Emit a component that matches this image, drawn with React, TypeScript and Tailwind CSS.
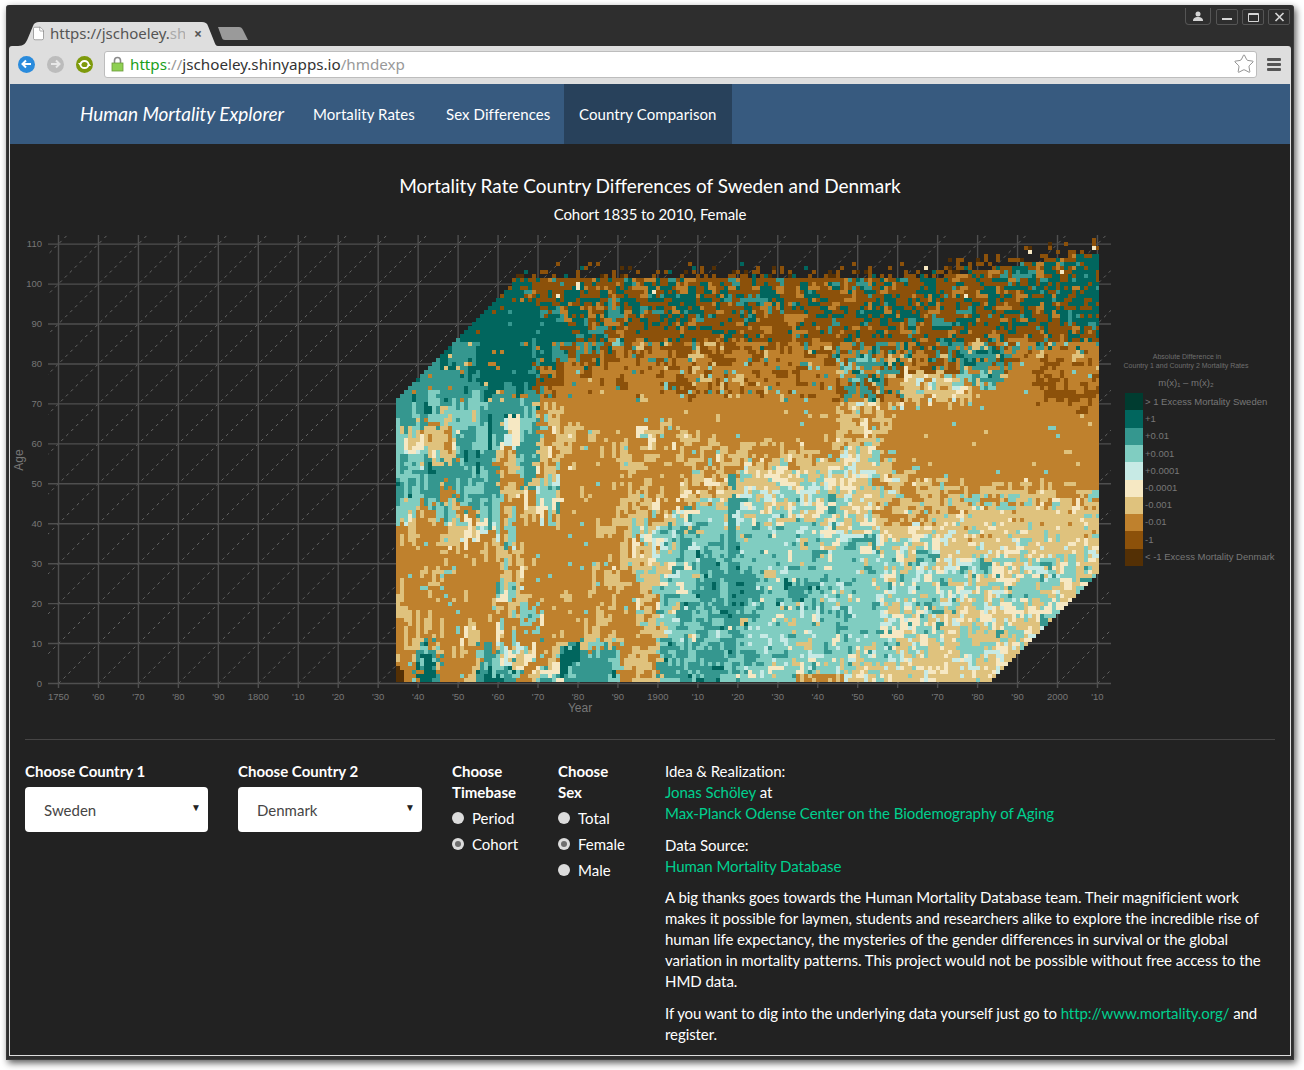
import { useMemo } from 'react';
import { File, Star } from 'lucide-react';

// BrBG palette, index 0 = "< -1" ... index 9 = "> 1"
const PALETTE = ['#543005', '#8c510a', '#bf812d', '#dfc27d', '#f6e8c3', '#c7eae5', '#80cdc1', '#35978f', '#01665e', '#003c30'];

// coarse picture of the surface: 36 columns of 20px from x=396, 21 rows of 20px from y=263
// digit 9 stands for "mostly tan", see LOW below
const ROWS = [
  '444444444444444444444444444444555566',
  '888888545455555554545454545445555567',
  '888888875555555545454545555454555667',
  '888888886654443333344444444433334556',
  '877788884433333333323355444477532222',
  '777788842222222222222255443367321221',
  '777777732222222222222244444432221111',
  '776677732222222222222233322222222222',
  '433774733322333222222233222222222222',
  '543773733232323333333344322222222222',
  '777773732223223334444444332222222222',
  '773773352322323344455544433333333333',
  '536363352223335666655544333399999999',
  '322455322223567666666555444499999999',
  '223223222223356776666665555444444444',
  '222223222233356777666666555555555554',
  '232226222232366777677666555555554444',
  '322223622222367777666666555444445544',
  '222323222222366666666666555454544444',
  '273274527772377777666665544454444444',
  '272277357772377776666644444444444444',
];

// what a cell can turn out as, one random character per cell
const TOP: Record<number, string> = {
  3: '11111111111111228888',
  4: '11111111111112278888',
  5: '11111111122788888888',
  6: '11111118888888888877',
  7: '11188888888888888777',
  8: '18888888888888888878',
};
const MID: Record<number, string> = {
  1: '11111111111111122222',
  2: '22222222222221111736',
  3: '22222222111111117783',
  4: '11111112222227778883',
  5: '77777777788811222266',
  6: '77777777777666622231',
  7: '77777777777888822233',
  8: '88888888888888887712',
};
const LOW: Record<number, string> = {
  1: '11111111111111122222',
  2: '22222222222222222336',
  3: '22222222333333333346',
  4: '33333333333444445566',
  5: '33344445556666666677',
  6: '66666666666666775543',
  7: '77777777777777666668',
  8: '88888888888888877772',
  9: '33333333333333334462',
};

const LEGEND = [
  { color: '#003c30', label: '> 1 Excess Mortality Sweden' },
  { color: '#01665e', label: '+1' },
  { color: '#35978f', label: '+0.01' },
  { color: '#80cdc1', label: '+0.001' },
  { color: '#c7eae5', label: '+0.0001' },
  { color: '#f6e8c3', label: '-0.0001' },
  { color: '#dfc27d', label: '-0.001' },
  { color: '#bf812d', label: '-0.01' },
  { color: '#8c510a', label: '-1' },
  { color: '#543005', label: '< -1 Excess Mortality Denmark' },
];

const X_LABELS = ['1750', "'60", "'70", "'80", "'90", '1800', "'10", "'20", "'30", "'40", "'50", "'60", "'70", "'80", "'90", '1900', "'10", "'20", "'30", "'40", "'50", "'60", "'70", "'80", "'90", '2000', "'10"];
const Y_LABELS = ['0', '10', '20', '30', '40', '50', '60', '70', '80', '90', '100', '110'];

// seeded random, so the picture is the same on every run
function makeRandom(seed: number) {
  let s = seed;
  return () => {
    s |= 0;
    s = (s + 0x6d2b79f5) | 0;
    let t = Math.imul(s ^ (s >>> 15), 1 | s);
    t = (t + Math.imul(t ^ (t >>> 7), 61 | t)) ^ t;
    return ((t ^ (t >>> 14)) >>> 0) / 4294967296;
  };
}

function buildCells() {
  const rnd = makeRandom(1835);
  const paths: string[] = PALETTE.map(() => '');
  const levels = new Int8Array(176 * 112).fill(-1);

  for (let c = 0; c < 176; c++) {
    const amax = c < 29 ? 70 + c : 100 + Math.max(0, c - 130) * 0.155;
    for (let a = 0; a <= 110; a++) {
      if (a < c - 148) continue;
      let level = -1;
      const x = 396 + c * 4;
      const y = 682 - (a + 1) * 4;
      if (a > amax) {
        // scattered cells above the upper edge
        if (c >= 29 && a <= amax + 4 && rnd() < 0.42 - (a - amax) * 0.08) {
          const t = rnd();
          level = t < 0.68 ? 1 : t < 0.84 ? 0 : t < 0.97 ? 8 : 4;
        } else continue;
      } else {
        const jx = x + (rnd() - 0.5) * 10;
        const jy = y + (rnd() - 0.5) * 16;
        const col = Math.max(0, Math.min(35, Math.floor((jx - 396) / 20)));
        const row = Math.max(0, Math.min(20, Math.floor((jy - 263) / 20)));
        const m = Number(ROWS[row].charAt(col));
        const table = y < 340 ? TOP : y < 400 && !(x > 900 && y > 370) ? MID : LOW;
        const choices = table[m] ?? table[m < 3 ? 3 : 8] ?? LOW[m];
        level = Number(choices.charAt(Math.floor(rnd() * 20)));
        // the big orange areas are nearly solid
        if (table === LOW && m === 2 && x > 540 && y < 500 && rnd() < 0.75) level = 2;

        // blobs and vertical streaks: often take over a neighbour's colour
        const below = a > 0 ? levels[c * 112 + a - 1] : -1;
        const left = c > 0 ? levels[(c - 1) * 112 + a] : -1;
        const pBelow = x < 640 ? (y < 340 ? 0.25 : 0.5) : 0.18;
        const pLeft = x < 640 ? 0.1 : 0.18;
        const t = rnd();
        const sameSide = x !== 536 && x !== 540;
        if (t < pBelow && below >= 0 && Math.abs(below - m) < 4) level = below;
        else if (t < pBelow + pLeft && left >= 0 && Math.abs(left - m) < 4 && sameSide) level = left;

        if (y < 300 && rnd() < 0.006) level = 4;
        if (x >= 727 && x < 733 && y > 470 && y < 650 && level < 8 && rnd() < 0.85) level = 7;
        if (y > 660 && x < 520 && level === 7 && rnd() < 0.2) level = 8;
        if (x < 400 && y > 668) level = 0;
        if (y > 670 && x > 793 && x < 843) level = rnd() < 0.6 ? 2 : 3;
      }
      levels[c * 112 + a] = level;
      const w = x + 4 > 1099 ? 1099 - x : 4;
      paths[level] += `M${x} ${y}h${w}v4h-${w}z`;
    }
  }
  return paths;
}

function MortalityChart() {
  const paths = useMemo(buildCells, []);
  const xs = X_LABELS.map((_, i) => 58.5 + i * 39.96);
  const ys = Y_LABELS.map((_, i) => 683.5 - i * 39.94);
  const diagonals: number[] = [];
  for (let i = -12; i < 27; i++) diagonals.push(58.5 + i * 39.96);

  return (
    <svg className="block w-[1280px] h-[490px]" viewBox="10 230 1280 490" style={{ fontFamily: '"Liberation Sans", Arial, sans-serif' }}>
      <defs>
        <clipPath id="plot-area">
          <rect x="48" y="235" width="1063" height="453" />
        </clipPath>
      </defs>
      <g clipPath="url(#plot-area)" stroke="#666666" strokeWidth="1" strokeDasharray="3 4">
        {diagonals.map((d) => (
          <line key={d} x1={d} y1={683.5} x2={d + 460} y2={223.5} />
        ))}
      </g>
      <g stroke="#4f4f4f" strokeWidth="1.4">
        {xs.map((x) => (
          <line key={x} x1={x} y1={235} x2={x} y2={688} />
        ))}
        {ys.map((y) => (
          <line key={y} x1={48} y1={y} x2={1111} y2={y} />
        ))}
      </g>
      <g shapeRendering="crispEdges">
        {paths.map((d, i) => (
          <path key={i} d={d} fill={PALETTE[i]} />
        ))}
      </g>
      <g fill="#777777" fontSize="9.5" textAnchor="middle">
        {X_LABELS.map((label, i) => (
          <text key={i} x={xs[i]} y={700}>{label}</text>
        ))}
      </g>
      <g fill="#777777" fontSize="9.5" textAnchor="end">
        {Y_LABELS.map((label, i) => (
          <text key={i} x={42} y={ys[i] + 3}>{label}</text>
        ))}
      </g>
      <text x={580} y={712} fill="#777777" fontSize="12" textAnchor="middle">Year</text>
      <text transform="translate(23 460) rotate(-90)" fill="#777777" fontSize="12" textAnchor="middle">Age</text>

      <g fill="#6f6f6f" fontSize="7" textAnchor="middle">
        <text x={1187} y={359}>Absolute Difference in</text>
        <text x={1186} y={368}>Country 1 and Country 2 Mortality Rates</text>
      </g>
      <text x={1186} y={386} fill="#777777" fontSize="9.5" textAnchor="middle">m(x)₁ – m(x)₂</text>
      <g shapeRendering="crispEdges">
        {LEGEND.map((item, i) => (
          <rect key={item.color} x={1125} y={393 + i * 17.3} width={18} height={17.4} fill={item.color} />
        ))}
      </g>
      <g fill="#777777" fontSize="9.5">
        {LEGEND.map((item, i) => (
          <text key={item.color} x={1145} y={405 + i * 17.2}>{item.label}</text>
        ))}
      </g>
    </svg>
  );
}

function WindowButton({ children }: { children: React.ReactNode }) {
  return (
    <div className="w-[22px] h-[16px] border border-[#555] rounded-[2px] flex items-center justify-center bg-[#2e2e2e]">
      {children}
    </div>
  );
}

function TitleBar() {
  return (
    <div className="relative h-[41px] flex items-end pl-[9px]">
      <div className="relative w-[200px] h-[25px]">
        <svg className="absolute inset-0" width="200" height="25" viewBox="0 0 200 25">
          <path d="M0 25C6 25 8 22 10 17L15 5C16 2 18 1 21 1H184C187 1 189 2 190 5L196 20C197 23 198 25 200 25Z" fill="#dedede" />
        </svg>
        <div className="relative flex items-center h-full pl-[13px] text-[15px] text-[#555]" style={{ fontFamily: '"Noto Sans", sans-serif' }}>
          <File className="w-[15px] h-[15px] text-[#777] fill-white shrink-0" strokeWidth={1} />
          <span className="ml-[4px] w-[135px] overflow-hidden whitespace-nowrap">
            https://jschoeley.<span className="text-[#aaa]">sh</span>
          </span>
          <span className="ml-[9px] text-[14px] font-bold text-[#555]">×</span>
        </div>
      </div>
      <svg className="mb-[5px] -ml-[1px]" width="32" height="15" viewBox="0 0 32 15">
        <path d="M1 1H22C24 1 25 2 26 4L31 14H8C6 14 5.500 13 5 12Z" fill="#9a9a9a" />
      </svg>
      <div className="absolute right-[1px] top-[4px] flex items-start">
        <div className="w-[26px] h-[17px] -mt-[1px] mr-[5px] border border-t-0 border-[#555] rounded-b-[4px] flex items-center justify-center">
          <svg width="12" height="11" viewBox="0 0 12 11">
            <circle cx="6" cy="3" r="2.500" fill="#d5d5d5" />
            <path d="M1 10C1 7 3 6 6 6S11 7 11 10Z" fill="#d5d5d5" />
          </svg>
        </div>
        <div className="flex gap-[4px]">
          <WindowButton>
            <div className="w-[10px] h-[2px] bg-[#d5d5d5] mt-[4px]" />
          </WindowButton>
          <WindowButton>
            <div className="w-[11px] h-[9px] border border-t-2 border-[#d5d5d5] rounded-[1px]" />
          </WindowButton>
          <WindowButton>
            <svg width="11" height="10" viewBox="0 0 11 10">
              <path d="M1.500 1L9.500 9M9.500 1L1.500 9" stroke="#d5d5d5" strokeWidth="1.700" />
            </svg>
          </WindowButton>
        </div>
      </div>
    </div>
  );
}

function NavCircle({ color, children }: { color: string; children: React.ReactNode }) {
  return (
    <div className="w-[17px] h-[17px] rounded-full flex items-center justify-center shrink-0" style={{ backgroundColor: color }}>
      {children}
    </div>
  );
}

function Toolbar() {
  return (
    <div className="h-[38px] pb-[2px] bg-[#dedede] rounded-t-[3px] flex items-center pl-[9px] gap-[12px]" style={{ fontFamily: '"Noto Sans", sans-serif' }}>
      <NavCircle color="#2a8bdc">
        <svg width="11" height="10" viewBox="0 0 11 10">
          <path d="M10 5H2M5 1.500L1.500 5L5 8.500" stroke="white" strokeWidth="2" fill="none" />
        </svg>
      </NavCircle>
      <NavCircle color="#bcbcbc">
        <svg width="11" height="10" viewBox="0 0 11 10">
          <path d="M1 5H9M6 1.500L9.500 5L6 8.500" stroke="#e8e8e8" strokeWidth="2" fill="none" />
        </svg>
      </NavCircle>
      <NavCircle color="#7e9a0c">
        <svg width="13" height="11" viewBox="0 0 13 11">
          <ellipse cx="6.500" cy="5.500" rx="4" ry="3.500" stroke="white" strokeWidth="1.800" fill="none" />
          <path d="M0 4H4L2 6.500ZM13 7H9L11 4.500Z" fill="white" />
        </svg>
      </NavCircle>
      <div className="-ml-[1px] w-[1153px] h-[27px] shrink-0 bg-white border border-[#bdbdbd] rounded-[3px] flex items-center pl-[6px] text-[15.200px] whitespace-nowrap">
        <svg className="mr-[6px]" width="13" height="16" viewBox="0 0 13 16">
          <path d="M3.500 8V4.500C3.500 2.500 4.800 1.500 6.500 1.500S9.500 2.500 9.500 4.500V8" stroke="#8a8a8a" strokeWidth="1.600" fill="none" />
          <rect x="1" y="7" width="11" height="8" fill="#8fd053" stroke="#6a9a3a" strokeWidth="0.800" />
        </svg>
        <span className="text-[#1a9e1a]">https</span>
        <span className="text-[#999]">://</span>
        <span className="text-[#333]">jschoeley.shinyapps.io</span>
        <span className="text-[#999]">/hmdexp</span>
        <Star className="ml-auto mr-[1px] w-[22px] h-[22px] text-[#888] fill-white" strokeWidth={1} />
      </div>
      <div className="-ml-[2px] w-[14px] flex flex-col gap-[2px]">
        <div className="h-[3px] bg-[#555] rounded-[1px]" />
        <div className="h-[3px] bg-[#555] rounded-[1px]" />
        <div className="h-[3px] bg-[#555] rounded-[1px]" />
      </div>
    </div>
  );
}

function NavBar() {
  return (
    <div className="h-[60px] bg-[#375a7f] flex items-stretch pl-[70px] text-white text-[15px] tracking-[0.08px]">
      <div className="flex items-center w-[233px] italic text-[19px] tracking-[-0.03px] whitespace-nowrap">Human Mortality Explorer</div>
      <div className="flex items-center w-[133px] whitespace-nowrap">Mortality Rates</div>
      <div className="flex items-center w-[118px] whitespace-nowrap">Sex Differences</div>
      <div className="flex items-center px-[15px] bg-[#28415b] whitespace-nowrap">Country Comparison</div>
    </div>
  );
}

function SelectBox({ value, className }: { value: string; className: string }) {
  return (
    <div className={`${className} h-[45px] bg-white rounded-[4px] flex items-center justify-between pl-[19px] pr-[7px] text-[#464545]`}>
      <span className="pt-[1px]">{value}</span>
      <span className="text-[10px] text-[#222] -mt-[5px]">▼</span>
    </div>
  );
}

function RadioRow({ label, checked }: { label: string; checked?: boolean }) {
  return (
    <div className="h-[26px] flex items-center gap-[8px]">
      <div className="w-[12px] h-[12px] rounded-full bg-[#dcdcdc] flex items-center justify-center">
        {checked && <div className="w-[6px] h-[6px] rounded-full bg-[#6e6e6e]" />}
      </div>
      <span>{label}</span>
    </div>
  );
}

function Controls() {
  const linkClass = 'text-[#00d08f]';
  return (
    <div className="flex pl-[15px] pt-[21px] text-[15px] leading-[21px] text-white">
      <div className="w-[213px] shrink-0">
        <div className="font-bold mb-[5px]">Choose Country 1</div>
        <SelectBox value="Sweden" className="w-[183px]" />
      </div>
      <div className="w-[214px] shrink-0">
        <div className="font-bold mb-[5px]">Choose Country 2</div>
        <SelectBox value="Denmark" className="w-[184px]" />
      </div>
      <div className="w-[106px] shrink-0">
        <div className="font-bold mb-[2px]">Choose<br />Timebase</div>
        <RadioRow label="Period" />
        <RadioRow label="Cohort" checked />
      </div>
      <div className="w-[107px] shrink-0">
        <div className="font-bold mb-[2px]">Choose<br />Sex</div>
        <RadioRow label="Total" />
        <RadioRow label="Female" checked />
        <RadioRow label="Male" />
      </div>
      <div className="w-[610px] tracking-[-0.05px] whitespace-nowrap">
        <p className="mb-[11px]">
          Idea &amp; Realization:<br />
          <span className={linkClass}>Jonas Schöley</span> at<br />
          <span className={linkClass}>Max-Planck Odense Center on the Biodemography of Aging</span>
        </p>
        <p className="mb-[10px]">
          Data Source:<br />
          <span className={linkClass}>Human Mortality Database</span>
        </p>
        <p className="mb-[11px]">
          A big thanks goes towards the Human Mortality Database team. Their magnificient work<br />
          makes it possible for laymen, students and researchers alike to explore the incredible rise of<br />
          human life expectancy, the mysteries of the gender differences in survival or the global<br />
          variation in mortality patterns. This project would not be possible without free access to the<br />
          HMD data.
        </p>
        <p className="tracking-[-0.08px]">
          If you want to dig into the underlying data yourself just go to <span className={linkClass}>http://www.mortality.org/</span> and<br />
          register.
        </p>
      </div>
    </div>
  );
}

export default function App() {
  return (
    <div className="w-[1304px] h-[1070px] bg-white pl-[6px] pt-[5px] overflow-hidden">
      <div className="w-[1288px] h-[1055px] bg-[#2e2e2e] px-[2px] pb-[3px] rounded-t-[3px] flex flex-col shadow-[2px_3px_7px_rgba(0,0,0,0.65)] border-x border-b border-[#3c3c3c]" style={{ fontFamily: 'Lato, sans-serif' }}>
        <TitleBar />
        <Toolbar />
        <div className="flex-1 bg-[#222222] border-x border-b border-[#dddddd] overflow-hidden">
          <NavBar />
          <div className="pt-[31px] text-center text-white">
            <h1 className="text-[19px] leading-[22px]">Mortality Rate Country Differences of Sweden and Denmark</h1>
            <p className="mt-[7px] text-[15px] leading-[21px] tracking-[-0.1px]">Cohort 1835 to 2010, Female</p>
          </div>
          <div className="mt-[5px]">
            <MortalityChart />
          </div>
          <div className="mt-[19px] mx-[15px] h-px bg-[#464545]" />
          <Controls />
        </div>
      </div>
    </div>
  );
}
